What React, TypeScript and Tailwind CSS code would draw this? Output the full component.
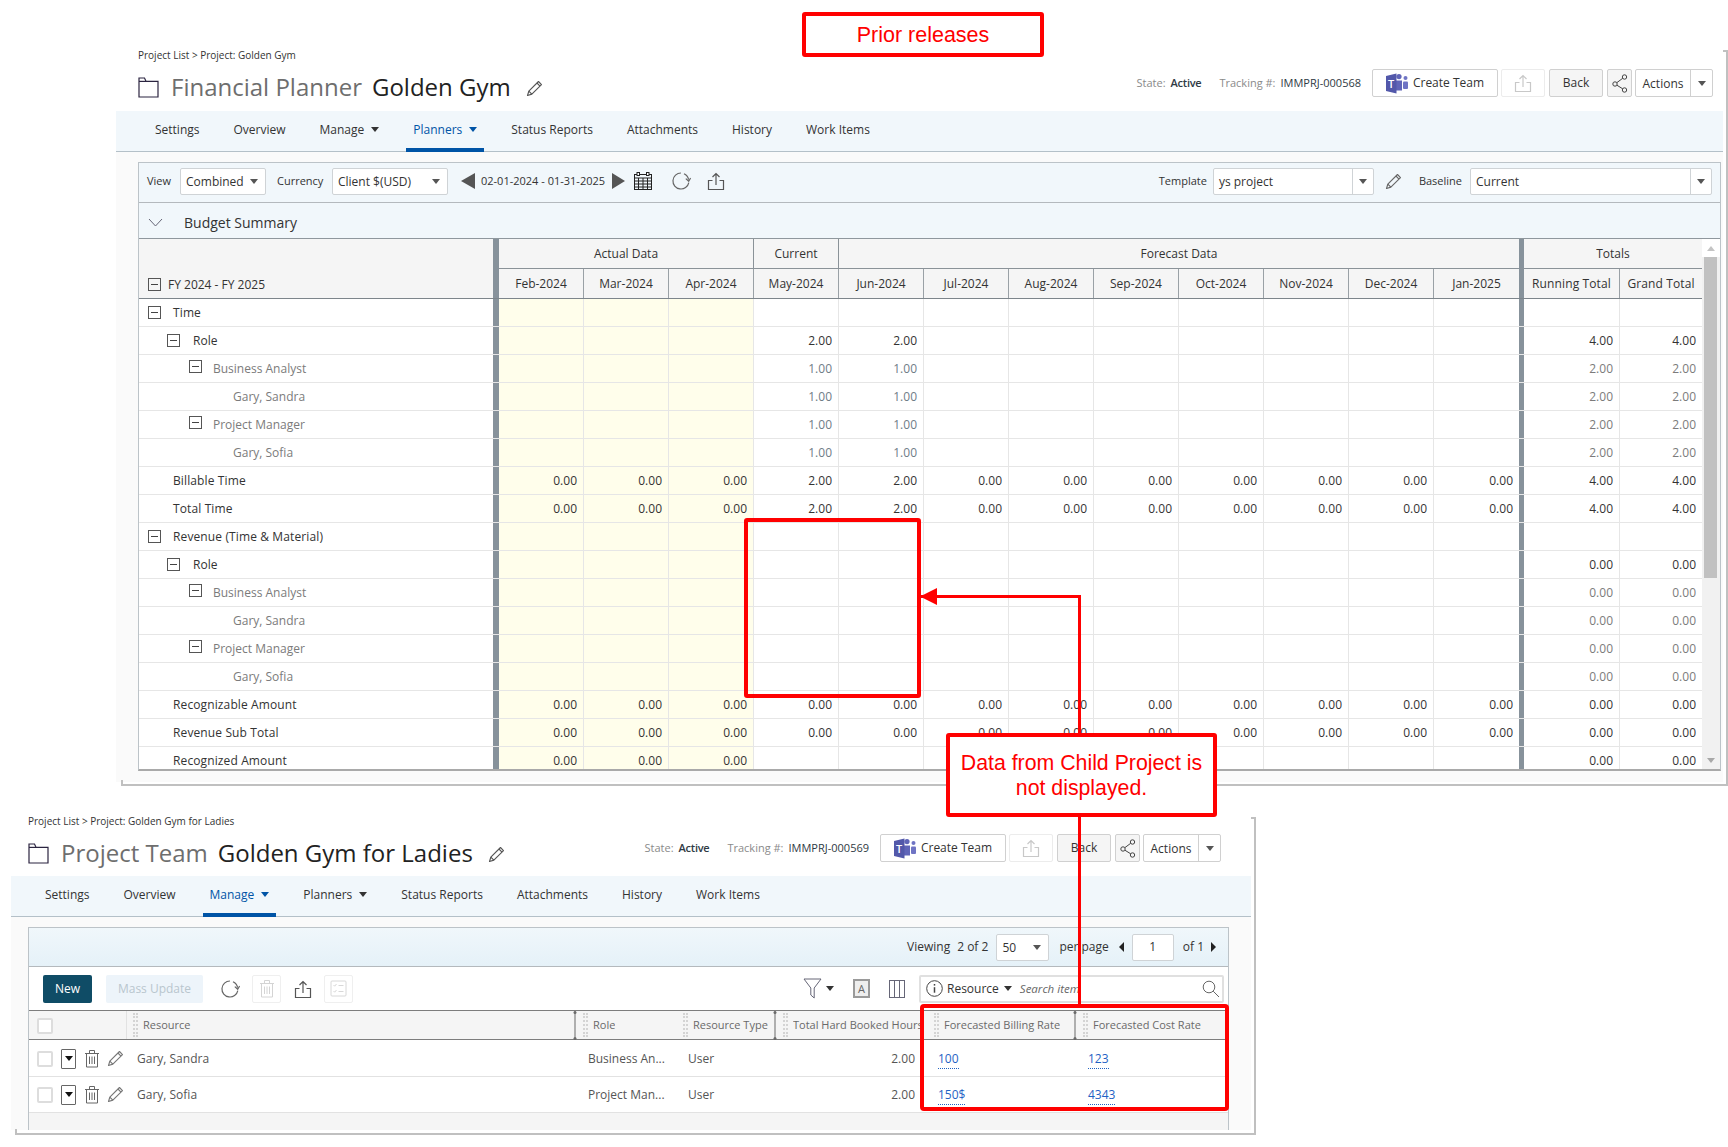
import React from 'react';

type Cell = string;
type PlannerRow = {
  label: string;
  kind: 'group' | 'role' | 'sub' | 'person' | 'total';
  cells: Cell[];
  totals: [Cell, Cell];
  muted?: boolean;
};

const MONTHS = ['Feb-2024', 'Mar-2024', 'Apr-2024', 'May-2024', 'Jun-2024', 'Jul-2024', 'Aug-2024', 'Sep-2024', 'Oct-2024', 'Nov-2024', 'Dec-2024', 'Jan-2025'];

const blank: Cell[] = Array(12).fill('');
const ones: Cell[] = ['', '', '', '1.00', '1.00', '', '', '', '', '', '', ''];
const twos: Cell[] = ['', '', '', '2.00', '2.00', '', '', '', '', '', '', ''];
const timeTotal: Cell[] = ['0.00', '0.00', '0.00', '2.00', '2.00', '0.00', '0.00', '0.00', '0.00', '0.00', '0.00', '0.00'];
const zeros: Cell[] = Array(12).fill('0.00');
const recognized: Cell[] = ['0.00', '0.00', '0.00', '', '', '', '', '', '', '', '', ''];

const ROWS: PlannerRow[] = [
  { label: 'Time', kind: 'group', cells: blank, totals: ['', ''] },
  { label: 'Role', kind: 'role', cells: twos, totals: ['4.00', '4.00'] },
  { label: 'Business Analyst', kind: 'sub', cells: ones, totals: ['2.00', '2.00'], muted: true },
  { label: 'Gary, Sandra', kind: 'person', cells: ones, totals: ['2.00', '2.00'], muted: true },
  { label: 'Project Manager', kind: 'sub', cells: ones, totals: ['2.00', '2.00'], muted: true },
  { label: 'Gary, Sofia', kind: 'person', cells: ones, totals: ['2.00', '2.00'], muted: true },
  { label: 'Billable Time', kind: 'total', cells: timeTotal, totals: ['4.00', '4.00'] },
  { label: 'Total Time', kind: 'total', cells: timeTotal, totals: ['4.00', '4.00'] },
  { label: 'Revenue (Time & Material)', kind: 'group', cells: blank, totals: ['', ''] },
  { label: 'Role', kind: 'role', cells: blank, totals: ['0.00', '0.00'] },
  { label: 'Business Analyst', kind: 'sub', cells: blank, totals: ['0.00', '0.00'], muted: true },
  { label: 'Gary, Sandra', kind: 'person', cells: blank, totals: ['0.00', '0.00'], muted: true },
  { label: 'Project Manager', kind: 'sub', cells: blank, totals: ['0.00', '0.00'], muted: true },
  { label: 'Gary, Sofia', kind: 'person', cells: blank, totals: ['0.00', '0.00'], muted: true },
  { label: 'Recognizable Amount', kind: 'total', cells: zeros, totals: ['0.00', '0.00'] },
  { label: 'Revenue Sub Total', kind: 'total', cells: zeros, totals: ['0.00', '0.00'] },
  { label: 'Recognized Amount', kind: 'total', cells: recognized, totals: ['0.00', '0.00'] },
];

const Caret: React.FC<{ className?: string }> = ({ className = 'border-t-[#333]' }) => (
  <span className={`inline-block w-0 h-0 border-x-[4px] border-x-transparent border-t-[5px] ${className}`} />
);

const MinusBox: React.FC<{ className?: string }> = ({ className = '' }) => (
  <span className={`w-[13px] h-[13px] shrink-0 border border-[#555] flex items-center justify-center ${className}`}>
    <span className="w-[7px] h-px bg-[#444]" />
  </span>
);

const FolderIcon = () => (
  <svg width="21" height="21" viewBox="0 0 21 21" fill="none" stroke="#2b2440" strokeWidth="1.2">
    <path d="M1 20V1h5.5l1.6 3.4H20V20z" />
    <path d="M1 4.4h7.1" />
  </svg>
);

const PencilIcon: React.FC<{ size?: number; color?: string }> = ({ size = 17, color = '#555' }) => (
  <svg width={size} height={size} viewBox="0 0 18 18" fill="none" stroke={color} strokeWidth="1.2" strokeLinejoin="round">
    <path d="M13.2 1.6l3.2 3.2L6.2 15 1.6 16.4 3 11.8z" />
    <path d="M3 11.8L6.2 15M11.6 3.2l3.2 3.2" />
  </svg>
);

const UploadIcon: React.FC<{ color?: string; size?: number }> = ({ color = '#555', size = 18 }) => (
  <svg width={size} height={size} viewBox="0 0 18 18" fill="none" stroke={color} strokeWidth="1.2">
    <path d="M5.5 8.5H1.5v9h15v-9h-4" />
    <path d="M9 13V1.5M5.5 5L9 1.5 12.5 5" />
  </svg>
);

const RefreshIcon = () => (
  <svg width="20" height="20" viewBox="0 0 20 20" fill="none" stroke="#666" strokeWidth="1.2">
    <path d="M10 2a8 8 0 1 0 7.8 9.6" />
    <path d="M13 2.7a8 8 0 0 1 4.6 6" />
    <path d="M14.8 7.6l2.9 2.6 1.9-3.2" />
  </svg>
);

const ShareIcon = () => (
  <svg width="16" height="19" viewBox="0 0 16 19" fill="none" stroke="#444" strokeWidth="1">
    <circle cx="12.5" cy="3" r="2.2" />
    <circle cx="3" cy="10" r="2.2" />
    <circle cx="12.5" cy="16" r="2.2" />
    <path d="M10.7 4.3L4.8 8.7M4.9 11.2l5.8 3.6" />
  </svg>
);

const TeamsIcon = () => (
  <svg width="23" height="21" viewBox="0 0 23 21">
    <circle cx="19.5" cy="5" r="2" fill="#6f74c4" />
    <rect x="17" y="8.5" width="5" height="7.5" rx="1" fill="#6f74c4" />
    <circle cx="13" cy="3.6" r="2.6" fill="#6065b8" />
    <rect x="10" y="7.5" width="6" height="10" fill="#6065b8" />
    <polygon points="0,3 10.5,0.5 10.5,20.5 0,18" fill="#5258aa" />
    <text x="5.2" y="14.5" textAnchor="middle" fill="#fff" fontSize="11" fontFamily="Open Sans" fontWeight="600">T</text>
  </svg>
);

const TrashIcon: React.FC<{ color?: string }> = ({ color = '#666' }) => (
  <svg width="16" height="19" viewBox="0 0 16 19" fill="none" stroke={color} strokeWidth="1">
    <path d="M1 4.5h14M2.5 4.5v13.5h11V4.5M5.5 4.5V1.5h5v3M5.5 7.5V15M8 7.5V15M10.5 7.5V15" />
  </svg>
);

const CalendarIcon = () => (
  <svg width="18" height="18" viewBox="0 0 18 18" fill="none" stroke="#222" strokeWidth="1">
    <rect x="0.5" y="2.5" width="17" height="15" />
    <path d="M0.5 6h17M0.5 9h17M0.5 12h17M0.5 15h17M4.5 6v11.5M9 6v11.5M13.5 6v11.5" />
    <rect x="3" y="0.5" width="2.5" height="3" fill="#fff" />
    <rect x="12.5" y="0.5" width="2.5" height="3" fill="#fff" />
  </svg>
);

const SelectBox: React.FC<{ label: string; className: string; split?: string }> = ({ label, className, split }) => (
  <div className={`flex items-center h-[27px] bg-white border border-[#cfd3d6] rounded-[2px] text-xs text-[#333] ${className}`}>
    <span className="pl-[5px] pt-[2px] flex-1">{label}</span>
    <span className={`h-full flex items-center justify-center ${split ?? 'w-[20px] pr-[2px]'}`}>
      <Caret className="border-t-[#555]" />
    </span>
  </div>
);

const HeaderButton: React.FC<{ className: string; children: React.ReactNode }> = ({ className, children }) => (
  <div className={`h-[28px] flex items-center justify-center border border-[#d0d0d0] rounded-[2px] text-xs text-[#333] ${className}`}>{children}</div>
);

const ProjectHeader: React.FC<{
  crumb: string;
  page: string;
  name: string;
  tracking: string;
  titleGap: string;
  titleTop: string;
  rowClass: string;
  tabsClass: string;
  active: string;
}> = ({ crumb, page, name, tracking, titleGap, titleTop, rowClass, tabsClass, active }) => {
  const tabs = ['Settings', 'Overview', 'Manage', 'Planners', 'Status Reports', 'Attachments', 'History', 'Work Items'];
  return (
    <>
      <div className={`h-[10px] leading-[10px] text-[10px] text-[#333] ${titleGap}`}>{crumb}</div>
      <div className={`flex justify-between ${rowClass} ${titleGap}`}>
        <div className={`flex items-center h-[30px] text-2xl leading-[30px] whitespace-nowrap ${titleTop}`}>
          <FolderIcon />
          <span className="ml-[12px] text-[#6e6e6e]">{page}</span>
          <span className="ml-[10px] text-[#222]">{name}</span>
          <span className="ml-[15px] mt-[2px]"><PencilIcon /></span>
        </div>
        <div className="flex items-center h-[28px] text-[11px] whitespace-nowrap">
          <span className="text-[#8a8a8a]">State:</span>
          <span className="ml-[5px] text-[#2f3a44] font-semibold tracking-[-0.25px]">Active</span>
          <span className="ml-[18px] text-[#8a8a8a]">Tracking #:</span>
          <span className="ml-[5px] text-[#2f3a44] font-medium">{tracking}</span>
          <HeaderButton className="ml-[11px] w-[126px] bg-white">
            <TeamsIcon />
            <span className="ml-[4px]">Create Team</span>
          </HeaderButton>
          <HeaderButton className="ml-[3px] w-[44px] bg-white border-[#ececec]">
            <UploadIcon color="#c8c8c8" />
          </HeaderButton>
          <HeaderButton className="ml-[4px] w-[54px] bg-[#f5f5f5]">Back</HeaderButton>
          <HeaderButton className="ml-[4px] w-[25px] bg-[#f5f5f5]">
            <ShareIcon />
          </HeaderButton>
          <div className="ml-[3px] w-[78px] h-[28px] flex border border-[#d0d0d0] rounded-[2px] bg-white text-xs text-[#333]">
            <span className="flex-1 flex items-center justify-center pt-[2px] border-r border-[#d0d0d0]">Actions</span>
            <span className="w-[21px] flex items-center justify-center"><Caret className="border-t-[#555]" /></span>
          </div>
        </div>
      </div>
      <div className={`h-[41px] flex bg-[#f1f7fb] border-b border-[#b4c0c8] text-xs text-[#333] ${tabsClass}`}>
        {tabs.map(tab => {
          const on = tab === active;
          return (
            <div
              key={tab}
              className={`mx-[10px] px-[7px] flex items-center gap-[7px] border-b-4 mb-[-1px] whitespace-nowrap ${on ? 'border-[#0054a6] text-[#0054a6]' : 'border-transparent'}`}
            >
              {tab}
              {(tab === 'Manage' || tab === 'Planners') && <Caret className={on ? 'border-t-[#0054a6]' : 'border-t-[#333]'} />}
            </div>
          );
        })}
      </div>
    </>
  );
};

const PlannerGrid = () => {
  const gridCols = 'grid grid-cols-[360px_repeat(12,85px)_101px_82px]';
  return (
    <div className="flex">
      <div className="w-[1563px]">
        <div className={`${gridCols} grid-rows-[30px_29px] bg-[#f5f5f5] border-b border-[#7d858b] text-xs text-[#333]`}>
          <div className="row-span-2 border-r-[6px] border-[#87929b] flex items-end pb-[7px] pl-[9px] font-medium">
            <MinusBox />
            <span className="ml-[7px] leading-none">FY 2024 - FY 2025</span>
          </div>
          <div className="col-span-3 flex items-center justify-center border-b border-r border-[#8a9298] font-medium">Actual Data</div>
          <div className="flex items-center justify-center border-b border-r border-[#8a9298] font-medium">Current</div>
          <div className="col-span-8 flex items-center justify-center border-b border-[#8a9298] font-medium">Forecast Data</div>
          <div className="col-span-2 flex items-center justify-center border-b border-l-[5px] border-[#8a9298] border-l-[#87929b] font-medium">Totals</div>
          {MONTHS.map((m, i) => (
            <div key={m} className={`flex items-center justify-center ${i < 11 ? 'border-r border-[#9aa1a6]' : ''}`}>{m}</div>
          ))}
          <div className="flex items-center justify-center border-l-[5px] border-r border-l-[#87929b] border-r-[#9aa1a6] font-medium tracking-[0.01em]">Running Total</div>
          <div className="flex items-center justify-center font-medium tracking-[0.01em]">Grand Total</div>
        </div>
        <div className="h-[470px] overflow-hidden">
          {ROWS.map((row, i) => (
            <div key={i} className={`${gridCols} h-[28px] text-xs border-b border-[#e6e6e6]`}>
              <div className="flex items-center border-r-[6px] border-r-[#87929b] bg-white">
                {row.kind === 'group' && <span className="pl-[9px] flex items-center"><MinusBox /><span className="ml-[12px] text-[#333] font-medium tracking-[0.01em]">{row.label}</span></span>}
                {row.kind === 'role' && <span className="pl-[28px] flex items-center"><MinusBox /><span className="ml-[13px] text-[#333] font-medium">{row.label}</span></span>}
                {row.kind === 'sub' && <span className="pl-[50px] flex items-center"><MinusBox className="-mt-[4px] border-[#222]" /><span className="ml-[11px] text-[#7b7b7b]">{row.label}</span></span>}
                {row.kind === 'person' && <span className="pl-[94px] text-[#7b7b7b]">{row.label}</span>}
                {row.kind === 'total' && <span className="pl-[34px] text-[#333] font-medium tracking-[0.01em]">{row.label}</span>}
              </div>
              {row.cells.map((v, c) => (
                <div
                  key={c}
                  className={`flex items-center justify-end pr-[6px] ${c < 11 ? 'border-r border-[#e6e6e6]' : ''} ${c < 3 ? 'bg-[#fffeeb]' : ''} ${row.muted ? 'text-[#6f7c87]' : 'text-[#333]'}`}
                >
                  {v}
                </div>
              ))}
              <div className={`flex items-center justify-end pr-[6px] border-l-[5px] border-r border-l-[#87929b] border-r-[#e6e6e6] ${row.muted ? 'text-[#7b7b7b]' : 'text-[#333]'}`}>{row.totals[0]}</div>
              <div className={`flex items-center justify-end pr-[6px] ${row.muted ? 'text-[#7b7b7b]' : 'text-[#333]'}`}>{row.totals[1]}</div>
            </div>
          ))}
        </div>
      </div>
      <div className="flex-1 flex flex-col bg-[#f1f1f1]">
        <div className="h-[18px] bg-white flex items-center justify-center">
          <span className="w-0 h-0 border-x-[4px] border-x-transparent border-b-[5px] border-b-[#c4c4c4]" />
        </div>
        <div className="h-[321px] w-[13px] ml-[2px] bg-[#c1c1c1]" />
        <div className="flex-1" />
        <div className="h-[18px] flex items-center justify-center">
          <Caret className="border-t-[#a8a8a8]" />
        </div>
      </div>
    </div>
  );
};

const FinancialPlanner = () => (
  <section className="relative ml-[116px] mt-[50px] w-[1612px] h-[736px] pr-[5px]">
    <div className="absolute top-0 right-0 bottom-0 w-[2px] bg-[#c0c0c0]" />
    <div className="absolute top-0 right-0 w-[5px] h-[2px] bg-[#c0c0c0]" />
    <div className="absolute bottom-0 right-0 left-[5px] h-[2px] bg-[#c0c0c0]" />
    <div className="absolute bottom-0 left-[5px] w-[2px] h-[6px] bg-[#c0c0c0]" />
    <ProjectHeader
      crumb="Project List > Project: Golden Gym"
      page="Financial Planner"
      name="Golden Gym"
      tracking="IMMPRJ-000568"
      titleGap="pl-[22px]"
      titleTop="mt-[3px]"
      rowClass="h-[51px] pt-[9px] pr-[10px]"
      tabsClass="pl-[22px]"
      active="Planners"
    />
    <div className="h-[630px] pt-[10px] pl-[22px] pr-[2px] bg-[#fafafa]">
      <div className="h-[609px] bg-white border border-[#bcc3c8] border-b-2 border-b-[#a9a9a9]">
        <div className="h-[40px] flex items-center pl-[8px] pr-[8px] pb-[3px] bg-[#f1f7fb] border-b border-[#b4b9bd] text-[11px] text-[#333]">
          <span className="w-[33px]">View</span>
          <SelectBox label="Combined" className="w-[86px]" />
          <span className="ml-[11px] w-[55px]">Currency</span>
          <SelectBox label="Client $(USD)" className="w-[116px]" />
          <span className="ml-[13px] w-0 h-0 border-y-[8px] border-y-transparent border-r-[14px] border-r-[#555]" />
          <span className="ml-[6px] w-[125px] whitespace-nowrap">02-01-2024 - 01-31-2025</span>
          <span className="ml-[6px] w-0 h-0 border-y-[8px] border-y-transparent border-l-[13px] border-l-[#555]" />
          <span className="ml-[9px]"><CalendarIcon /></span>
          <span className="ml-[19px]"><RefreshIcon /></span>
          <span className="ml-[16px]"><UploadIcon /></span>
          <span className="ml-auto">Template</span>
          <SelectBox label="ys project" className="ml-[6px] w-[161px]" split="w-[21px] border-l border-[#cfd3d6]" />
          <span className="ml-[11px]"><PencilIcon color="#666" /></span>
          <span className="ml-[17px]">Baseline</span>
          <SelectBox label="Current" className="ml-[8px] w-[242px]" split="w-[21px] border-l border-[#cfd3d6]" />
        </div>
        <div className="h-[36px] flex items-center pl-[9px] pt-[4px] bg-[#f1f7fb] border-b border-[#8f979d] text-sm text-[#333]">
          <svg width="15" height="9" viewBox="0 0 15 9" fill="none" stroke="#667" strokeWidth="1">
            <path d="M1 1l6.5 7L14 1" />
          </svg>
          <span className="ml-[21px]">Budget Summary</span>
        </div>
        <PlannerGrid />
      </div>
    </div>
  </section>
);

const DragDots = () => <span className="w-[5px] h-[24px] shrink-0 border-x-2 border-dotted border-[#d4d4d4]" />;

const ResizeHandle = () => (
  <svg className="absolute -right-[3px] top-0" width="6" height="29" viewBox="0 0 6 29" fill="#6b6b6b">
    <rect x="2.5" y="0" width="1" height="29" />
    <circle cx="3" cy="1.5" r="1.5" />
    <circle cx="3" cy="27.5" r="1.5" />
  </svg>
);

const TEAM_COLS = 'grid grid-cols-[98px_448px_100px_100px_151px_149px_153px]';

const TeamTable = () => {
  const headers: { label: string; handle: boolean }[] = [
    { label: 'Resource', handle: true },
    { label: 'Role', handle: false },
    { label: 'Resource Type', handle: true },
    { label: 'Total Hard Booked Hours', handle: false },
    { label: 'Forecasted Billing Rate', handle: true },
    { label: 'Forecasted Cost Rate', handle: false },
  ];
  const people = [
    { name: 'Gary, Sandra', role: 'Business An...', billing: '100', cost: '123' },
    { name: 'Gary, Sofia', role: 'Project Man...', billing: '150$', cost: '4343' },
  ];
  return (
    <>
      <div className={`${TEAM_COLS} h-[30px] bg-[#f5f5f5] border-y border-[#7d7d7d] text-[11px] text-[#6a6a6a]`}>
        <div className="flex items-center pl-[8px] pt-[1px] border-r border-[#e2e2e2]">
          <span className="w-[16px] h-[16px] bg-white border-2 border-[#dddddd] rounded-[2px]" />
        </div>
        {headers.map((h, i) => (
          <div key={h.label} className={`relative flex items-center whitespace-nowrap ${i === 0 ? 'pl-[6px]' : 'pl-[8px]'}`}>
            <DragDots />
            <span className="ml-[5px] overflow-hidden">{h.label}</span>
            {h.handle && <ResizeHandle />}
          </div>
        ))}
      </div>
      {people.map((p, i) => (
        <div key={p.name} className={`${TEAM_COLS} ${i === 0 ? 'h-[37px] pt-[1px]' : 'h-[36px]'} bg-white border-b border-[#e2e2e2] text-xs text-[#555] items-center`}>
          <div className="flex items-center pl-[8px]">
            <span className="w-[16px] h-[16px] border-2 border-[#dddddd] rounded-[2px]" />
            <span className="ml-[8px] w-[15px] h-[20px] border border-[#666] rounded-[1px] flex items-center justify-center"><Caret className="border-t-[#111]" /></span>
            <span className="ml-[8px]"><TrashIcon /></span>
            <span className="ml-[7px]"><PencilIcon color="#777" /></span>
          </div>
          <div className="pl-[10px] text-[#555]">{p.name}</div>
          <div className="pl-[13px]">{p.role}</div>
          <div className="pl-[13px]">User</div>
          <div className="pr-[11px] text-right">2.00</div>
          <div className="pl-[12px]"><span className="text-[#1f62c4] border-b border-dotted border-[#1f62c4] pb-[1px]">{p.billing}</span></div>
          <div className="pl-[13px]"><span className="text-[#1f62c4] border-b border-dotted border-[#1f62c4] pb-[1px]">{p.cost}</span></div>
        </div>
      ))}
    </>
  );
};

const ProjectTeam = () => (
  <section className="relative ml-[11px] mt-[30px] w-[1245px] h-[319px] pr-[5px]">
    <div className="absolute top-[1px] right-0 bottom-0 w-[2px] bg-[#c0c0c0]" />
    <div className="absolute top-[1px] right-0 w-[5px] h-[2px] bg-[#c0c0c0]" />
    <div className="absolute bottom-0 right-0 left-[4px] h-[2px] bg-[#c0c0c0]" />
    <div className="absolute bottom-0 left-[4px] w-[2px] h-[6px] bg-[#c0c0c0]" />
    <ProjectHeader
      crumb="Project List > Project: Golden Gym for Ladies"
      page="Project Team"
      name="Golden Gym for Ladies"
      tracking="IMMPRJ-000569"
      titleGap="pl-[17px]"
      titleTop="mt-[4px]"
      rowClass="h-[50px] pt-[8px] pr-[30px]"
      tabsClass="pl-[17px]"
      active="Manage"
    />
    <div className="h-[213px] pt-[10px] pl-[17px] pr-[22px] bg-[#fafafa]">
      <div className="h-[203px] flex flex-col bg-white border-x border-t border-[#bcc3c8]">
        <div className="h-[39px] shrink-0 flex items-center justify-end pr-[12px] bg-linear-to-b from-[#f0f7fb] to-[#e5f1f8] border-b border-[#b4b9bd] text-xs text-[#333] whitespace-nowrap">
          <span>Viewing</span>
          <span className="ml-[7px]">2 of 2</span>
          <SelectBox label="50" className="ml-[8px] w-[53px]" />
          <span className="ml-[10px]">per page</span>
          <span className="ml-[10px] w-0 h-0 border-y-[5px] border-y-transparent border-r-[5px] border-r-[#222]" />
          <span className="ml-[8px] w-[42px] h-[27px] bg-white border border-[#cfd3d6] rounded-[2px] flex items-center justify-center">1</span>
          <span className="ml-[9px]">of 1</span>
          <span className="ml-[7px] w-0 h-0 border-y-[5px] border-y-transparent border-l-[5px] border-l-[#222]" />
        </div>
        <div className="h-[43px] shrink-0 flex items-center pl-[14px] pr-[4px]">
          <span className="w-[49px] h-[28px] flex items-center justify-center bg-[#0f4c66] rounded-[2px] text-xs text-white font-medium">New</span>
          <span className="ml-[14px] w-[97px] h-[28px] flex items-center justify-center bg-[#edf4fa] rounded-[2px] text-xs text-[#b9c6ce]">Mass Update</span>
          <span className="ml-[17px]"><RefreshIcon /></span>
          <span className="ml-[12px] w-[29px] h-[28px] flex items-center justify-center border border-[#efefef] rounded-[2px]"><TrashIcon color="#d4d4d4" /></span>
          <span className="ml-[13px]"><UploadIcon /></span>
          <span className="ml-[12px] w-[29px] h-[28px] flex items-center justify-center border border-[#efefef] rounded-[2px]">
            <svg width="17" height="17" viewBox="0 0 17 17" fill="none" stroke="#d8d8d8" strokeWidth="1">
              <rect x="1" y="1" width="15" height="15" rx="1" />
              <path d="M3.5 5l1.2 1.2L6.5 4M3.5 11l1.2 1.2L6.5 10M8.5 5.5h5M8.5 11.5h5" />
            </svg>
          </span>
          <span className="ml-auto flex items-center gap-[3px]">
            <svg width="20" height="21" viewBox="0 0 20 21" fill="none" stroke="#667" strokeWidth="1">
              <path d="M1 1h17l-6.8 9v10L7.8 17v-7z" />
            </svg>
            <Caret className="border-t-[#333]" />
          </span>
          <span className="ml-[19px] mr-[3px] w-[17px] h-[19px] flex items-center justify-center border-2 border-[#9a9a9a] bg-[#eeeeee] text-[11px] leading-none text-[#666]">A</span>
          <svg className="ml-[16px]" width="16" height="18" viewBox="0 0 16 18" fill="none" stroke="#667" strokeWidth="1">
            <rect x="0.5" y="0.5" width="15" height="17" />
            <path d="M5.5 0.5v17M10.5 0.5v17" />
          </svg>
          <div className="ml-[14px] w-[305px] h-[28px] flex items-center pl-[5px] pr-[2px] border-2 border-[#e0e0e0] rounded-[2px] text-xs text-[#333]">
            <svg width="17" height="17" viewBox="0 0 17 17" fill="none" stroke="#444" strokeWidth="1">
              <circle cx="8.5" cy="8.5" r="7.8" />
              <path d="M8.5 7.2v5.5" strokeWidth="1.5" />
              <path d="M8.5 4v1.6" strokeWidth="1.5" />
            </svg>
            <span className="ml-[4px] font-medium">Resource</span>
            <span className="ml-[5px] flex"><Caret className="border-t-[#333]" /></span>
            <span className="ml-[8px] text-[11.5px] italic text-[#666]">Search item</span>
            <svg className="ml-auto" width="18" height="18" viewBox="0 0 18 18" fill="none" stroke="#666" strokeWidth="1">
              <circle cx="7" cy="7" r="5.8" />
              <path d="M11.2 11.2l5.8 5.8" />
            </svg>
          </div>
        </div>
        <TeamTable />
        <div className="flex-1 bg-[#f5f5f5]" />
      </div>
    </div>
  </section>
);

// Red markup drawn over the two screenshots
const Annotations = () => {
  const font = "font-['Liberation_Sans',Arial,sans-serif] text-[#ff0000]";
  return (
    <>
      <div className={`absolute left-[802px] top-[12px] w-[242px] h-[45px] flex items-center justify-center pt-[2px] bg-white border-4 border-[#ff0000] rounded-[3px] text-[21.5px] ${font}`}>Prior releases</div>
      <div className="absolute left-[744px] top-[518px] w-[177px] h-[180px] border-4 border-[#ff0000] rounded-[3px]" />
      <div className="absolute left-[920px] top-[595px] w-[161px] h-[3px] bg-[#ff0000]" />
      <div className="absolute left-[1078px] top-[595px] w-[3px] h-[410px] bg-[#ff0000]" />
      <svg className="absolute left-[920px] top-[588px]" width="18" height="17" viewBox="0 0 18 17">
        <polygon points="0,8.5 17,0 17,17" fill="#ff0000" />
      </svg>
      <div className={`absolute left-[946px] top-[733px] w-[271px] h-[84px] flex items-center justify-center text-center pt-[2px] bg-white border-4 border-[#ff0000] rounded-[3px] text-[21.3px] leading-[25px] ${font}`}>
        Data from Child Project is<br />not displayed.
      </div>
      <div className="absolute left-[920px] top-[1004px] w-[309px] h-[107px] border-4 border-[#ff0000] rounded-[4px]" />
    </>
  );
};

export default function App() {
  return (
    <div className="relative w-[1728px] h-[1147px] overflow-hidden bg-white font-['Open_Sans',sans-serif]">
      <FinancialPlanner />
      <ProjectTeam />
      <Annotations />
    </div>
  );
}
